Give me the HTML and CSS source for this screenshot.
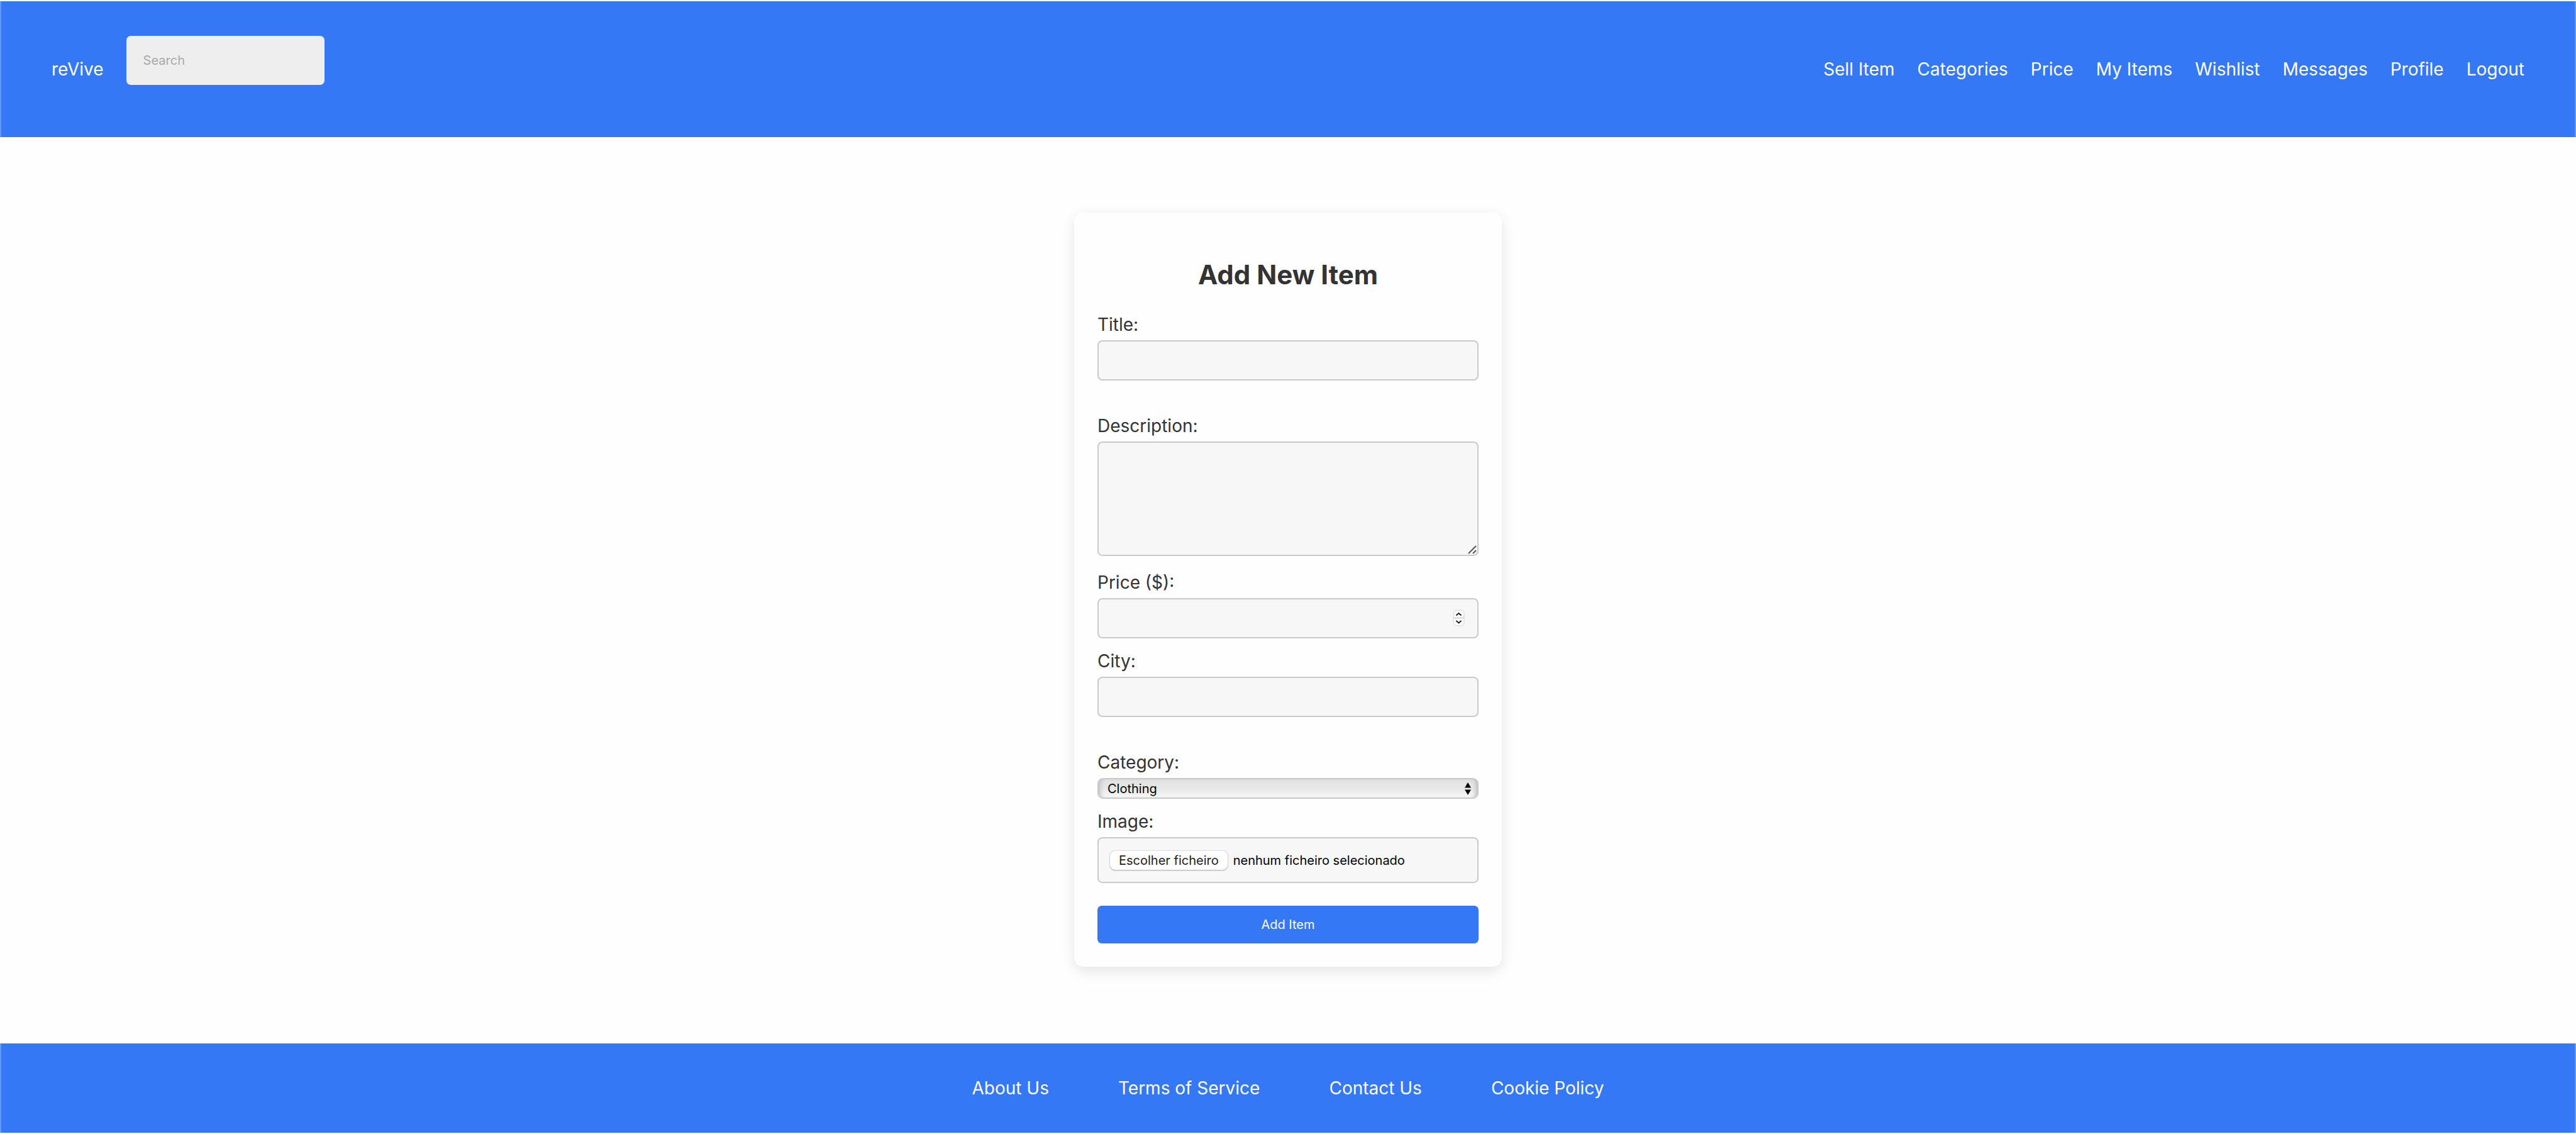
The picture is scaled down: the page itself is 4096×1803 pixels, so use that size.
FILE: index.html
```html
<!DOCTYPE html>
<html lang="en">
<head>
<meta charset="utf-8">
<title>reVive</title>
<link rel="stylesheet" href="styles.css">
</head>
<body>
<header class="site-header">
  <a class="brand" href="#">reVive</a>
  <form class="search-form"><input class="search" type="search" placeholder="Search" aria-label="Search"></form>
  <nav class="site-nav">
    <a href="#">Sell Item</a>
    <a href="#">Categories</a>
    <a href="#">Price</a>
    <a href="#">My Items</a>
    <a href="#">Wishlist</a>
    <a href="#">Messages</a>
    <a href="#">Profile</a>
    <a href="#">Logout</a>
  </nav>
</header>
<main class="main">
  <form class="card">
    <h2 class="card-title">Add New Item</h2>
    <div class="field field-spaced">
      <label for="title">Title:</label>
      <input class="control" type="text" id="title">
    </div>
    <div class="field field-area">
      <label for="description">Description:</label>
      <div class="control-wrap">
        <textarea class="control control-area" id="description"></textarea>
        <svg class="grip" viewBox="0 0 14 14" aria-hidden="true"><path d="M1 13 13 1M8 13l5-5"/></svg>
      </div>
    </div>
    <div class="field">
      <label for="price">Price ($):</label>
      <div class="control-wrap">
        <input class="control" type="number" id="price">
        <svg class="stepper" viewBox="0 0 19 27" aria-hidden="true"><rect class="stepper-body" x="1" y="1" width="17" height="25" rx="6"/><path class="stepper-line" d="M1 13.500h17"/><path class="stepper-arrow" d="m5.500 9.500 4-3.500 4 3.500M5.500 18l4 3.500 4-3.500"/></svg>
      </div>
    </div>
    <div class="field field-spaced">
      <label for="city">City:</label>
      <input class="control" type="text" id="city">
    </div>
    <div class="field">
      <label for="category">Category:</label>
      <div class="control-wrap">
        <select class="select" id="category"><option>Clothing</option></select>
        <svg class="select-arrows" viewBox="0 0 10 20" aria-hidden="true"><path d="M0 8.500 5 0l5 8.500zM0 11.500h10L5 20z"/></svg>
      </div>
    </div>
    <div class="field">
      <label for="image">Image:</label>
      <div class="control file-box">
        <span class="file-button">Escolher ficheiro</span>
        <span>nenhum ficheiro selecionado</span>
        <input class="file-input" type="file" id="image">
      </div>
    </div>
    <button class="submit" type="submit">Add Item</button>
  </form>
</main>
<footer class="site-footer">
  <a href="#">About Us</a>
  <a href="#">Terms of Service</a>
  <a href="#">Contact Us</a>
  <a href="#">Cookie Policy</a>
</footer>
</body>
</html>
```
FILE: styles.css
```css
* { box-sizing: border-box; }

body {
  margin: 0;
  min-height: 100vh;
  padding: 2px 0;
  display: flex;
  flex-direction: column;
  background: #fefefe;
  color: #333;
  font: 28px/36px Inter, "Liberation Sans", sans-serif;
}

a { color: #fff; text-decoration: none; }

input, textarea, select, button { font: inherit; }

.site-header,
.site-footer {
  display: flex;
  background: #3478f6;
  border: solid #6698f8;
  border-width: 0 2px;
}

.site-header {
  min-height: 216px;
  padding: 0 80px;
  align-items: center;
}

.search-form { margin: 0 0 28px 36px; }

.search {
  display: block;
  width: 315px;
  height: 78px;
  padding: 0 27px;
  border: 0;
  border-radius: 7px;
  background: #eee;
  font-size: 20px;
}

.search::placeholder { color: #a9a9a9; }

.site-nav {
  display: flex;
  gap: 36px;
  margin-left: auto;
}

.main {
  flex: 1;
  display: flex;
  justify-content: center;
  align-items: flex-start;
  padding: 120px 0;
}

.card {
  width: 100%;
  max-width: 680px;
  padding: 72px 37px 37px;
  border-radius: 15px;
  background: #fefefe;
  box-shadow: 0 7px 22px rgba(0, 0, 0, 0.1);
}

.card-title {
  margin: 0 0 34px;
  font-size: 42px;
  line-height: 54px;
  text-align: center;
}

.field { margin-bottom: 18px; }
.field-area { margin-bottom: 24px; }
.field-spaced { margin-bottom: 54px; }

.field label {
  display: block;
  margin-bottom: 7px;
}

.control-wrap { position: relative; }

.control {
  display: block;
  width: 100%;
  height: 64px;
  padding: 0 18px;
  border: 2px solid #c9c9c9;
  border-radius: 8px;
  background: #f7f7f7;
  appearance: none;
}

.control-area {
  height: 182px;
  resize: none;
}

.control::-webkit-inner-spin-button { appearance: none; }

.grip {
  position: absolute;
  right: 3px;
  bottom: 3px;
  width: 14px;
  height: 14px;
  fill: none;
  stroke: #555;
  stroke-width: 2;
}

.stepper {
  position: absolute;
  right: 22px;
  top: 18px;
  width: 19px;
  height: 27px;
  fill: none;
}

.stepper-body { fill: #fff; stroke: #d4d4d4; }
.stepper-line { stroke: #d4d4d4; stroke-width: 2; }
.stepper-arrow { stroke: #222; stroke-width: 2; }

.select {
  display: block;
  width: 100%;
  height: 33px;
  padding: 0 14px;
  border: 2px solid #c9c9c9;
  border-radius: 9px;
  background: linear-gradient(#e2e2e2, #e6e6e6 50%, #f9f9f9);
  box-shadow: inset 7px 0 7px -5px #bbb, inset -7px 0 7px -5px #bbb;
  color: #000;
  font-size: 20px;
  line-height: 28px;
  appearance: none;
}

.select-arrows {
  position: absolute;
  right: 12px;
  top: 7px;
  width: 10px;
  height: 20px;
}

.file-box {
  position: relative;
  display: flex;
  align-items: center;
  gap: 9px;
  height: 73px;
  color: #000;
  font-size: 20px;
}

.file-button {
  padding: 0 14px;
  border-radius: 8px;
  background: #fff;
  box-shadow: 0 0 2px rgba(0, 0, 0, 0.3), 0 1px 2px rgba(0, 0, 0, 0.25);
  color: #222;
  line-height: 30px;
}

.file-input {
  position: absolute;
  inset: 0;
  opacity: 0;
}

.submit {
  display: block;
  width: 100%;
  height: 60px;
  margin-top: 36px;
  border: 0;
  border-radius: 7px;
  background: #3478f6;
  color: #fff;
  font-size: 20px;
}

.site-footer {
  min-height: 142px;
  justify-content: center;
  align-items: center;
  gap: 110px;
}
```
